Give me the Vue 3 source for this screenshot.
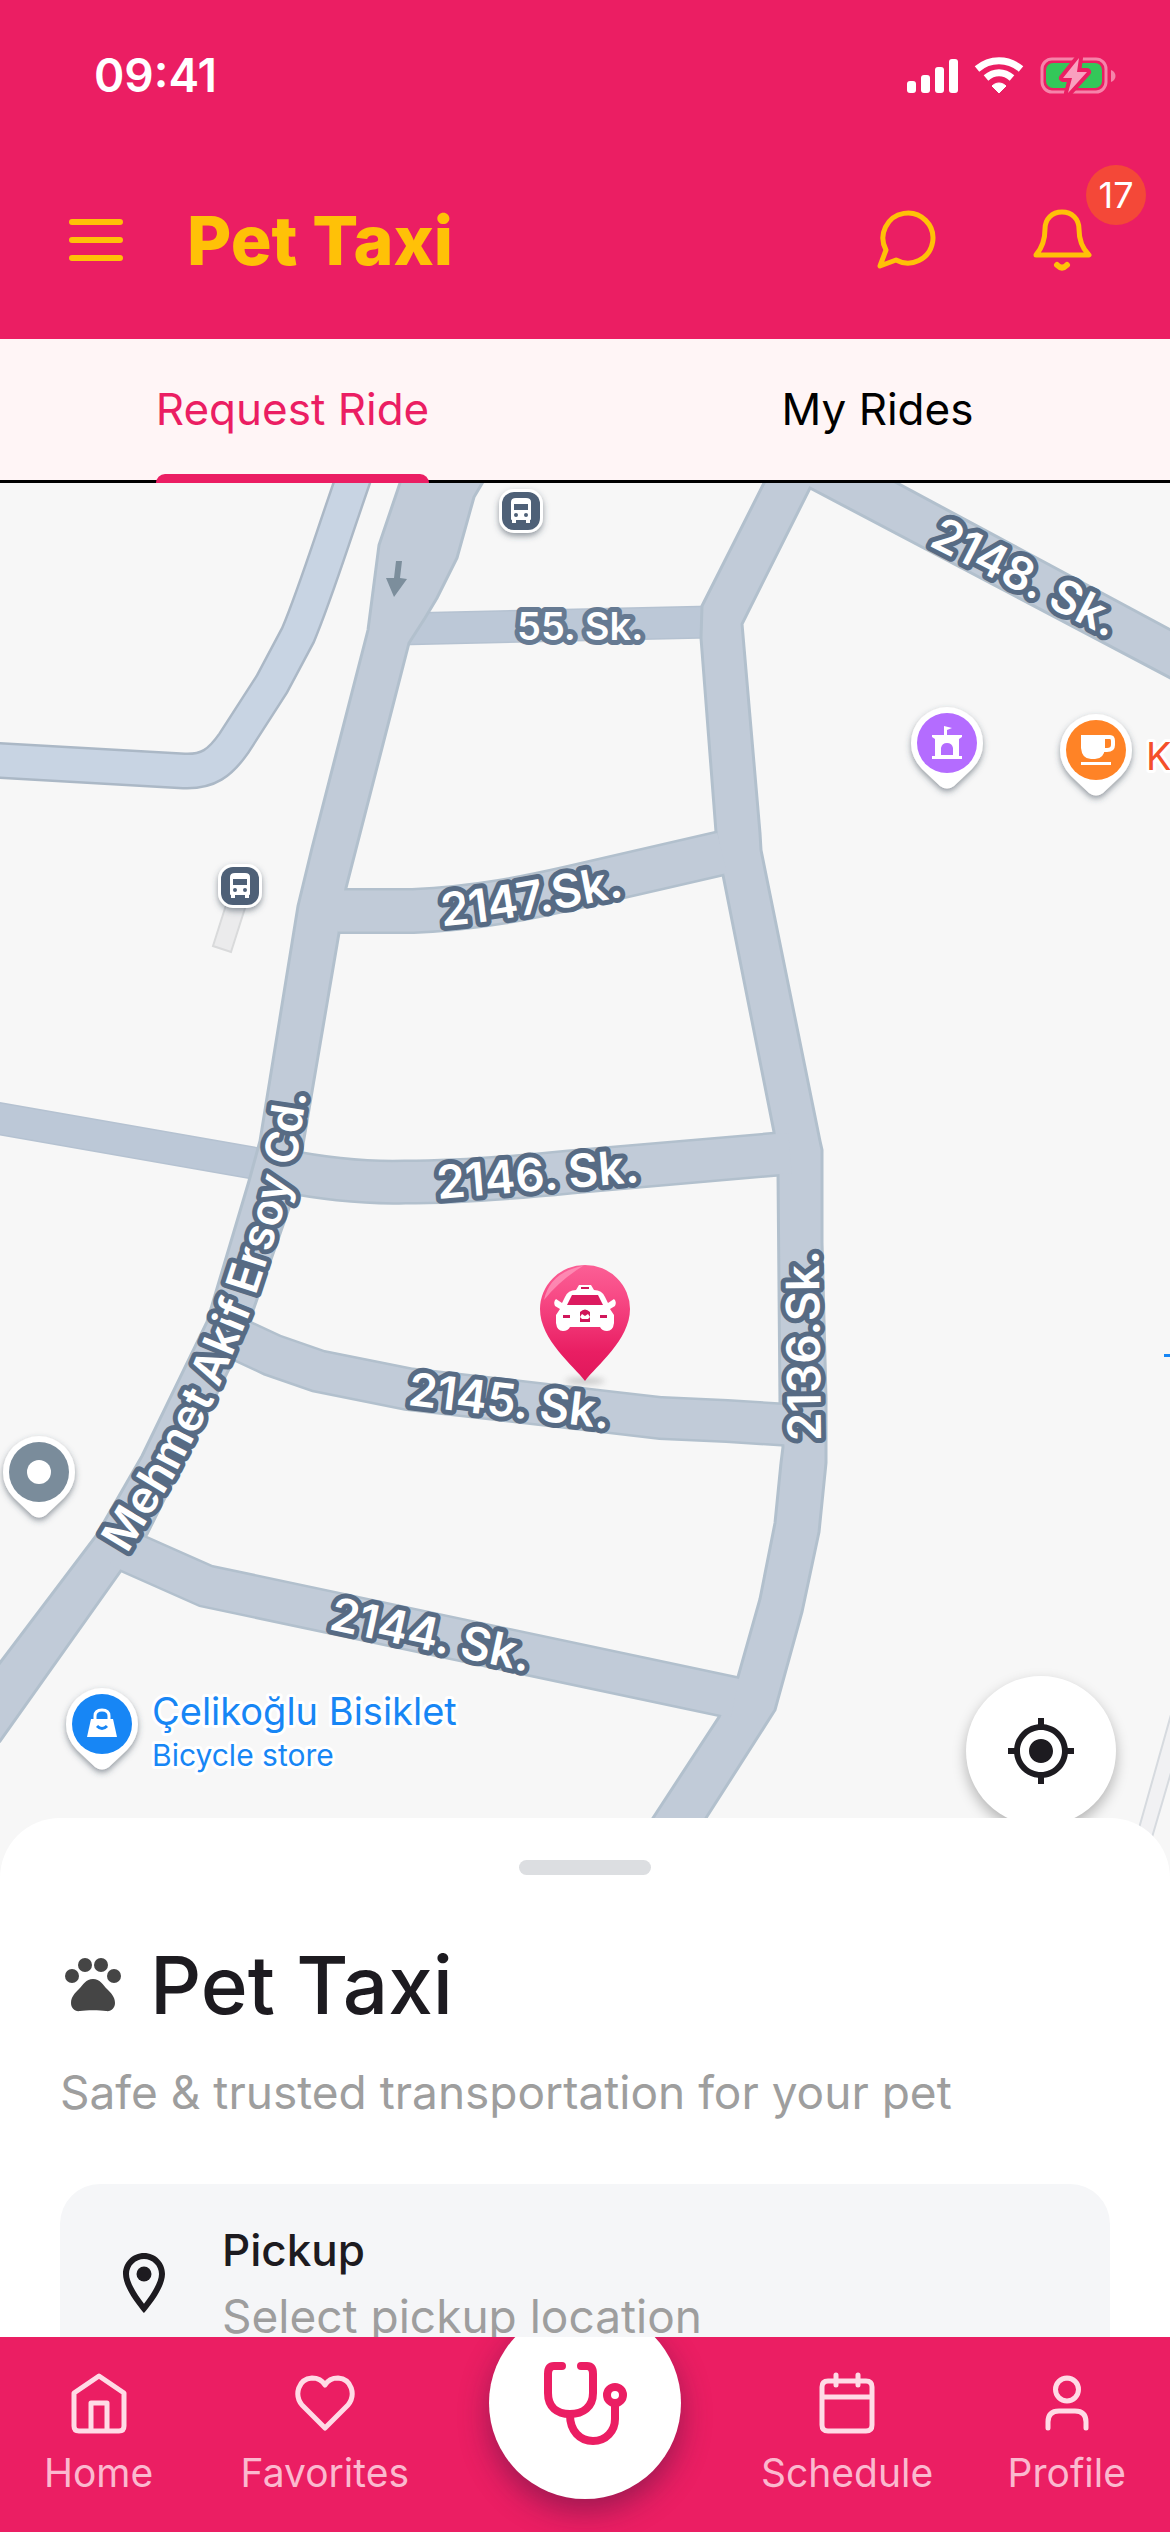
<script setup>
import { ref } from 'vue'

const tabs = ['Request Ride', 'My Rides']
const activeTab = ref(0)

const navLeft = [
  { label: 'Home', icon: 'home' },
  { label: 'Favorites', icon: 'heart' },
]
const navRight = [
  { label: 'Schedule', icon: 'calendar' },
  { label: 'Profile', icon: 'user' },
]

const avenues = [
  'M400 470 L400 483 L379 545 L368 630 L312 848 L298 906 L260 1141 L249 1181 L207 1322 L142 1456 L96 1536 L-10 1676 L-10 1753 L0 1741 L120 1572 L147 1534 L233 1361 L249 1322 L289 1208 L302 1150 L306 1127 L339 933 L346 888 L409 643 L425 618 L437 598 L457 558 L474 497 L490 470 Z',
  'M764 483 L702 606 L701 638 L716 832 L723 875 L774 1132 L778 1173 L780 1403 L783 1447 L781 1463 L775 1523 L760 1599 L738 1677 L719 1717 L653 1818 L606 1888 L658 1888 L706 1818 L775 1710 L802 1612 L819 1532 L826 1463 L826 1398 L822 1242 L822 1150 L820 1141 L761 850 L760 833 L742 624 L810 488 L1180 683 L1180 635 L897 483 L870 468 L772 468 Z',
]
const streets = [
  { d: 'M338 911 L413 911 C480 908 530 897 570 888 L722 853', w: 46 },
  { d: 'M280 1170 C330 1180 370 1183 405 1182 C450 1182 520 1177 570 1172 L790 1153', w: 45 },
  { d: 'M225 1333 L272 1355 L318 1371 L408 1389 L600 1411 L661 1418 L727 1421 L790 1425', w: 44 },
  { d: 'M118 1547 L206 1586 L735 1698', w: 44 },
]
const lanes = [
  'M400 629 L710 622',
  'M-10 1117 L270 1166',
]
const labels = [
  { id: 's2148', text: '2148. Sk.', d: 'M928 545 L1150 659' },
  { id: 's2147', text: '2147.Sk.', d: 'M442 926 C500 922 560 909 680 885' },
  { id: 's2146', text: '2146. Sk.', d: 'M438 1199 L690 1178' },
  { id: 's2145', text: '2145. Sk.', d: 'M407 1405 L660 1435' },
  { id: 's2144', text: '2144. Sk.', d: 'M328 1629 L580 1683' },
  { id: 's2136', text: '2136.Sk.', d: 'M821 1441 L818 1200' },
  { id: 'ersoy', text: 'Mehmet Akif Ersoy Cd.', d: 'M127 1554 L172 1480 L213 1402 L251 1310 L282 1215 L298 1150 L310 1070', long: true },
]
const pins = [
  { x: 947, y: 743, color: '#b46cff', kind: 'school' },
  { x: 1096, y: 750, color: '#ff8326', kind: 'cafe' },
  { x: 39, y: 1472, color: '#7a8c9b', kind: 'place' },
  { x: 102, y: 1724, color: '#1786f5', kind: 'shop' },
]
const stops = [
  { x: 521, y: 511 },
  { x: 240, y: 886 },
]
</script>

<template>
  <div class="app">
    <header class="header">
      <div class="status">
        <span class="time">09:41</span>
        <svg class="status-icons" viewBox="0 0 210 40" aria-hidden="true">
          <g fill="#fff">
            <rect x="1" y="26" width="9" height="12" rx="3" />
            <rect x="15" y="20" width="9" height="18" rx="3" />
            <rect x="29" y="12" width="9" height="26" rx="3" />
            <rect x="43" y="4" width="9" height="34" rx="3" />
            <path d="M93 38 L86 31 C90 27 96 27 100 31 Z" stroke="#fff" stroke-linejoin="round" />
          </g>
          <g fill="none" stroke="#fff" stroke-width="7">
            <path d="M71 14 C84 3 102 3 115 14" />
            <path d="M80 23 C88 16 98 16 106 23" />
          </g>
          <rect x="136" y="4" width="64" height="33" rx="10" fill="none" stroke="#f684aa" stroke-width="3" />
          <path d="M205 15 C211 17 211 25 205 27 Z" fill="#f684aa" />
          <rect x="140" y="8" width="56" height="25" rx="7" fill="#34c759" />
          <path d="M173 3 L157 23 L166 23 L162 38 L181 17 L171 17 Z" fill="#f9a0bf" stroke="#eb1e63" stroke-width="8" stroke-linejoin="round" paint-order="stroke" />
        </svg>
      </div>
      <div class="bar">
        <button class="icon-button menu" aria-label="Menu">
          <svg viewBox="0 0 54 42"><path d="M3 3H51M3 21H51M3 39H51" /></svg>
        </button>
        <h1 class="brand">Pet Taxi</h1>
        <button class="icon-button chat" aria-label="Messages">
          <svg viewBox="0 0 60 60"><path d="M9 40 A25 25 0 1 1 19 50 L3 56 Z" /></svg>
        </button>
        <button class="icon-button bell" aria-label="Notifications">
          <svg viewBox="0 0 60 66">
            <path d="M4 48 C10 41 13 33 13 22 C13 12 20 5 30 5 C40 5 47 12 47 22 C47 33 50 41 57 48 Z" />
            <path d="M25 58 Q30 63 35 58" stroke-width="6" />
          </svg>
          <span class="badge">17</span>
        </button>
      </div>
    </header>

    <nav class="tabs">
      <button
        v-for="(tab, i) in tabs"
        :key="tab"
        class="tab"
        :class="{ active: i === activeTab }"
        @click="activeTab = i"
      >
        <span class="tab-label">{{ tab }}</span>
      </button>
    </nav>

    <section class="map">
      <svg class="map-canvas" viewBox="0 483 1170 1395" preserveAspectRatio="xMidYMin slice">
        <defs>
          <linearGradient id="pinFill" x1="0" y1="0" x2="0" y2="1">
            <stop offset="0" stop-color="#fb5f95" />
            <stop offset="0.25" stop-color="#f84c87" />
            <stop offset="0.75" stop-color="#e91e63" />
            <stop offset="1" stop-color="#e0185b" />
          </linearGradient>
          <filter id="drop" x="-30%" y="-30%" width="160%" height="170%">
            <feDropShadow dx="0" dy="3" stdDeviation="3" flood-color="#3a4655" flood-opacity="0.55" />
          </filter>
          <filter id="soft" x="-30%" y="-100%" width="160%" height="300%">
            <feGaussianBlur stdDeviation="3" />
          </filter>
          <path v-for="l in labels" :id="l.id" :key="l.id" :d="l.d" />
        </defs>

        <path d="M226 905 L246 905 L231 952 L213 946 Z" fill="#ebebec" stroke="#d9dadb" stroke-width="2" />
        <path d="M1185 1665 L1123 1885 L1138 1885 L1185 1725" fill="#f1f1f3" stroke="#d6dadf" stroke-width="2" />

        <g fill="none">
          <path class="river-edge" d="M-10 760 L184 771 C208 772 220 763 234 743 L272 684 L298 635 C316 592 330 545 358 465" />
          <path class="river" d="M-10 760 L184 771 C208 772 220 763 234 743 L272 684 L298 635 C316 592 330 545 358 465" />
          <path v-for="d in lanes" :key="d" :d="d" stroke="#b5c2d1" stroke-width="33" />
          <path v-for="d in lanes" :key="'f' + d" :d="d" stroke="#bcc8d7" stroke-width="30" />
          <path v-for="s in streets" :key="s.d" :d="s.d" stroke="#b2c0cd" :stroke-width="s.w" />
          <path v-for="d in avenues" :key="d" :d="d" fill="#c1cbd8" stroke="#b2c0cd" stroke-width="3" />
          <path v-for="s in streets" :key="'f' + s.d" :d="s.d" stroke="#c1cbd8" :stroke-width="s.w - 5" />
        </g>
        <path d="M396 561 L402 561 L400 578 L407 579 L394 597 L386 578 L394 578 Z" fill="#7c8e9c" />

        <text class="street lane" x="517" y="640">55. Sk.</text>
        <text v-for="l in labels" :key="'t' + l.id" class="street" :class="{ avenue: l.long }">
          <textPath :href="'#' + l.id">{{ l.text }}</textPath>
        </text>

        <g v-for="s in stops" :key="s.x" :transform="`translate(${s.x} ${s.y})`">
          <rect x="-22" y="-22" width="44" height="44" rx="15" fill="#fff" filter="url(#drop)" />
          <rect x="-19" y="-19" width="38" height="38" rx="12" fill="#4e6077" />
          <path d="M-10 -9 Q-10 -13 -5 -13 H5 Q10 -13 10 -9 V8 Q10 9 9 9 V12 H5 V9 H-5 V12 H-9 V9 Q-10 9 -10 8 Z" fill="#fff" />
          <rect x="-7" y="-7" width="14" height="6" fill="#4e6077" />
          <circle cx="-5" cy="4" r="2" fill="#4e6077" />
          <circle cx="5" cy="4" r="2" fill="#4e6077" />
        </g>

        <g v-for="p in pins" :key="p.kind" :transform="`translate(${p.x} ${p.y})`">
          <path d="M-25 26 A36 36 0 1 1 25 26 L7 43 Q0 48 -7 43 Z" fill="#fff" filter="url(#drop)" />
          <circle r="30" :fill="p.color" />
          <path v-if="p.kind === 'school'" d="M-3 -17 L5 -15 L0 -13 V-8 H15 V-6 L12 -4 V13 H15 V16 H-15 V13 H-12 V-4 L-15 -6 V-8 H-3 Z M-6 12 H6 V5 Q5 0 0 0 Q-5 0 -6 5 Z" fill="#fff" fill-rule="evenodd" />
          <g v-else-if="p.kind === 'cafe'">
            <path d="M-15 -15 H9 V-2 Q8 9 -1 9 H-5 Q-14 9 -15 -2 Z M-15 12 H15 V15 H-15 Z" fill="#fff" />
            <path d="M8 -13 H14 Q17 -13 17 -9 V-5 Q17 0 11 0 H8" fill="none" stroke="#fff" stroke-width="4" />
          </g>
          <circle v-else-if="p.kind === 'place'" r="12" fill="#fff" />
          <g v-else>
            <path d="M-11 -5 H11 L15 13 H-15 Z" fill="#fff" />
            <path d="M-7 -4 V-8 Q-7 -14 0 -14 Q7 -14 7 -8 V-4" fill="none" stroke="#fff" stroke-width="3" />
            <path d="M-5 2 Q0 7 5 2" fill="none" stroke="#1786f5" stroke-width="3" />
          </g>
        </g>

        <text class="poi cafe" x="1146" y="770">K</text>
        <text class="poi" x="152" y="1725">Çelikoğlu Bisiklet</text>
        <text class="poi small" x="152" y="1766">Bicycle store</text>
        <rect x="1164" y="1354" width="10" height="3" fill="#1786f5" />

        <ellipse cx="585" cy="1381" rx="20" ry="3" fill="#444" opacity="0.3" filter="url(#soft)" />
        <path d="M585 1381 C574 1366 540 1340 540 1309 A45 44 0 0 1 630 1309 C630 1340 596 1366 585 1381 Z" fill="url(#pinFill)" />
        <path d="M544 1300 Q550 1272 583 1266 Q560 1280 544 1300 Z" fill="#ff9dc0" opacity="0.7" />
        <g transform="translate(585 1309)">
          <path d="M-6 -24 H6 L9 -19 Q17 -19 20 -12 L23 -6 L29 -10 Q32 -7 30 -3 L25 0 L29 6 V14 Q28 22 22 22 Q17 22 15 18 H-15 Q-17 22 -22 22 Q-28 22 -29 14 V6 L-25 0 L-30 -3 Q-32 -7 -29 -10 L-23 -6 L-20 -12 Q-17 -19 -9 -19 Z" fill="#fff" />
          <path d="M-13 -14 H13 L18 -4 H-18 Z" fill="#dc1b60" />
          <path d="M-4 -22 H4 V-20 H-4 Z M-22 6 H-15 V9 H-22 Z M15 6 H22 V9 H15 Z M-5 3 Q0 -2 5 3 V13 H-5 Z" fill="#d0165a" />
          <path d="M-5 8 L-3 5 L0 7 L3 5 L5 8 L3 10 H-3 Z" fill="#fff" />
        </g>
      </svg>
      <button class="locate" aria-label="My location">
        <svg viewBox="0 0 24 24"><path d="M12 8c-2.21 0-4 1.79-4 4s1.79 4 4 4 4-1.79 4-4-1.79-4-4-4zm8.94 3c-.46-4.17-3.77-7.48-7.94-7.94V1h-2v2.06C6.83 3.52 3.52 6.83 3.06 11H1v2h2.06c.46 4.17 3.77 7.48 7.94 7.94V23h2v-2.06c4.17-.46 7.48-3.77 7.94-7.94H23v-2h-2.06zM12 19c-3.87 0-7-3.13-7-7s3.13-7 7-7 7 3.13 7 7-3.13 7-7 7z" /></svg>
      </button>
    </section>

    <section class="sheet">
      <div class="grabber"></div>
      <div class="sheet-body">
        <div class="sheet-head">
          <svg viewBox="0 0 66 66" fill="#454545" aria-hidden="true">
            <circle cx="12" cy="24" r="7" />
            <circle cx="25" cy="13" r="7" />
            <circle cx="41" cy="13" r="7" />
            <circle cx="54" cy="24" r="7" />
            <path d="M33 27 C40 27 43 33 47 37 C51 41 55 45 55 51 C55 56 51 60 46 59 C40 58 26 58 20 59 C15 60 11 56 11 51 C11 45 15 41 19 37 C23 33 26 27 33 27 Z" />
          </svg>
          <h2>Pet Taxi</h2>
        </div>
        <p class="subtitle">Safe &amp; trusted transportation for your pet</p>
        <button class="pickup">
          <svg viewBox="0 0 24 24" aria-hidden="true"><path d="M12 2C8.13 2 5 5.13 5 9c0 5.25 7 13 7 13s7-7.75 7-13c0-3.87-3.13-7-7-7zM7 9c0-2.76 2.24-5 5-5s5 2.24 5 5c0 2.88-2.88 7.19-5 9.88C9.92 16.21 7 11.85 7 9z" /><circle cx="12" cy="9" r="2.5" /></svg>
          <span class="pickup-text">
            <strong>Pickup</strong>
            <span>Select pickup location</span>
          </span>
        </button>
      </div>
    </section>

    <nav class="bottom-nav">
      <div class="nav-group">
        <a v-for="item in navLeft" :key="item.label" href="#" class="nav-item">
          <svg viewBox="0 0 60 64" aria-hidden="true">
            <path v-if="item.icon === 'home'" d="M30 5 L55 22 V55 Q55 60 50 60 H10 Q5 60 5 55 V22 Z M22 60 V32 H38 V60" />
            <path v-else d="M30 57 L7 34 C-1 24 3 8 17 7 C23 7 27 9 30 14 C33 9 37 7 43 7 C57 8 61 24 53 34 Z" />
          </svg>
          <span>{{ item.label }}</span>
        </a>
      </div>
      <button class="care" aria-label="Vet care">
        <svg viewBox="0 0 90 92">
          <path d="M22 9 H14 Q8 9 8 17 V36 C8 50 17 57 30 57 C43 57 53 50 53 36 V17 Q53 9 47 9 H41" />
          <path d="M30 58 C30 74 40 84 53 84 C66 84 75 74 75 62 V47" />
          <circle cx="75" cy="38" r="8" />
        </svg>
      </button>
      <div class="nav-group">
        <a v-for="item in navRight" :key="item.label" href="#" class="nav-item">
          <svg viewBox="0 0 60 64" aria-hidden="true">
            <path v-if="item.icon === 'calendar'" d="M11 10 H49 Q55 10 55 16 V54 Q55 60 49 60 H11 Q5 60 5 54 V16 Q5 10 11 10 Z M5 26 H55 M19 4 V14 M41 4 V14" />
            <path v-else d="M30 7 A11 11 0 0 1 30 30 A11 11 0 0 1 30 7 Z M11 57 V51 Q11 40 22 40 H38 Q49 40 49 51 V57" />
          </svg>
          <span>{{ item.label }}</span>
        </a>
      </div>
    </nav>
  </div>
</template>

<style>
body {
  margin: 0;
  background: #fff;
}
</style>

<style scoped>
.app {
  --pink: #eb1e63;
  --gold: #ffc107;
  --ink: #1d1b20;
  height: 100vh;
  display: flex;
  flex-direction: column;
  overflow: hidden;
  font-family: Inter, 'Open Sans', sans-serif;
}
button {
  padding: 0;
  border: 0;
  background: none;
  font: inherit;
  color: inherit;
  cursor: pointer;
}
svg {
  display: block;
}
.header {
  flex: none;
  padding-bottom: 9px;
  background: var(--pink);
}
.status {
  height: 150px;
  padding: 0 54px 0 94px;
  display: flex;
  align-items: center;
  justify-content: space-between;
  color: #fff;
}
.time {
  font-size: 46px;
  font-weight: 600;
}
.status-icons {
  width: 210px;
  height: 40px;
}
.bar {
  height: 180px;
  padding: 0 78px 0 69px;
  display: flex;
  align-items: center;
}
.icon-button svg {
  fill: none;
  stroke: var(--gold);
  stroke-width: 5;
  stroke-linecap: round;
  stroke-linejoin: round;
}
.icon-button.menu svg {
  width: 54px;
  height: 42px;
  stroke-width: 6;
}
.brand {
  flex: 1;
  margin: 0 0 0 64px;
  color: var(--gold);
  font-size: 68px;
  font-weight: 800;
}
.chat svg {
  width: 60px;
  height: 60px;
}
.bell {
  position: relative;
  margin-left: 95px;
}
.bell svg {
  width: 60px;
  height: 66px;
}
.badge {
  position: absolute;
  top: -42px;
  right: -54px;
  width: 60px;
  height: 60px;
  border-radius: 50%;
  background: #f44838;
  color: #fff;
  font-size: 36px;
  line-height: 60px;
  text-align: center;
}
.tabs {
  flex: none;
  height: 141px;
  display: flex;
  border-bottom: 3px solid #000;
  background: #fff5f6;
}
.tab {
  flex: 1;
  display: flex;
  justify-content: center;
  color: #000;
  font-size: 44px;
  line-height: 141px;
}
.tab-label {
  position: relative;
}
.tab.active {
  color: var(--pink);
}
.tab.active .tab-label::after {
  content: '';
  position: absolute;
  left: 0;
  right: 0;
  bottom: -3px;
  height: 9px;
  border-radius: 9px 9px 0 0;
  background: var(--pink);
}
.map {
  position: relative;
  flex: 18 1 0;
  min-height: 0;
}
.map-canvas {
  width: 100%;
  height: calc(100% + 60px);
  background: #f7f7f7;
}
.river-edge {
  stroke: #abb8c6;
  stroke-width: 37;
}
.river {
  stroke: #c8d4e3;
  stroke-width: 32;
}
.street {
  font-size: 46px;
  font-weight: 600;
  fill: #fff;
  stroke: #576b84;
  stroke-width: 10px;
  stroke-linejoin: round;
  paint-order: stroke;
}
.street.avenue {
  font-size: 45px;
}
.street.lane {
  font-size: 38px;
  stroke: #667a92;
}
.poi {
  font-size: 38px;
  fill: #1786f5;
  stroke: #fff;
  stroke-width: 6px;
  stroke-linejoin: round;
  paint-order: stroke;
}
.poi.small {
  font-size: 30px;
}
.poi.cafe {
  fill: #f4502a;
}
.locate {
  position: absolute;
  right: 54px;
  bottom: -8px;
  width: 150px;
  height: 150px;
  display: flex;
  align-items: center;
  justify-content: center;
  border-radius: 50%;
  background: #fff;
  box-shadow: 0 6px 14px rgba(0, 0, 0, 0.28);
}
.locate svg {
  width: 72px;
  height: 72px;
  fill: var(--ink);
}
.sheet {
  position: relative;
  flex: 7 1 0;
  min-height: 0;
  overflow: hidden;
  border-radius: 60px 60px 0 0;
  background: #fff;
}
.grabber {
  width: 132px;
  height: 15px;
  margin: 42px auto 60px;
  border-radius: 8px;
  background: #dcdee1;
}
.sheet-body {
  padding: 0 60px;
}
.sheet-head {
  display: flex;
  align-items: center;
  gap: 24px;
}
.sheet-head svg {
  width: 66px;
  height: 66px;
}
.sheet-head h2 {
  margin: 0;
  color: var(--ink);
  font-size: 80px;
  font-weight: 500;
  line-height: 100px;
}
.subtitle {
  margin: 24px 0 0;
  color: #9e9e9e;
  font-size: 46px;
  line-height: 66px;
  white-space: nowrap;
}
.pickup {
  width: 100%;
  margin-top: 59px;
  padding: 33px 48px;
  display: flex;
  align-items: center;
  gap: 42px;
  border-radius: 40px;
  background: #f5f6f8;
  text-align: left;
}
.pickup svg {
  width: 72px;
  height: 72px;
  fill: var(--ink);
}
.pickup-text {
  display: flex;
  flex-direction: column;
  color: #9e9e9e;
  font-size: 46px;
  line-height: 66px;
}
.pickup-text strong {
  color: var(--ink);
  font-size: 44px;
  font-weight: 500;
}
.bottom-nav {
  position: relative;
  flex: none;
  padding: 0 44px;
  display: grid;
  grid-template-columns: 1fr auto 1fr;
  column-gap: 80px;
  align-items: start;
  overflow: hidden;
  background: var(--pink);
}
.nav-group {
  position: relative;
  z-index: 1;
  display: flex;
  justify-content: space-between;
}
.nav-item {
  padding: 34px 0 37px;
  display: flex;
  flex-direction: column;
  align-items: center;
  gap: 16px;
  color: #fbb9cf;
  font-size: 39px;
  line-height: 44px;
  text-decoration: none;
}
.nav-item svg {
  width: 60px;
  height: 64px;
  fill: none;
  stroke: #ffdbe6;
  stroke-width: 5;
  stroke-linecap: round;
  stroke-linejoin: round;
}
.care {
  width: 192px;
  height: 192px;
  margin-top: -30px;
  display: flex;
  align-items: center;
  justify-content: center;
  border-radius: 50%;
  background: #fff;
  box-shadow: 0 12px 30px rgba(60, 20, 60, 0.45);
}
.care svg {
  width: 90px;
  height: 92px;
  fill: none;
  stroke: var(--pink);
  stroke-width: 8;
  stroke-linecap: round;
  stroke-linejoin: round;
}
</style>
